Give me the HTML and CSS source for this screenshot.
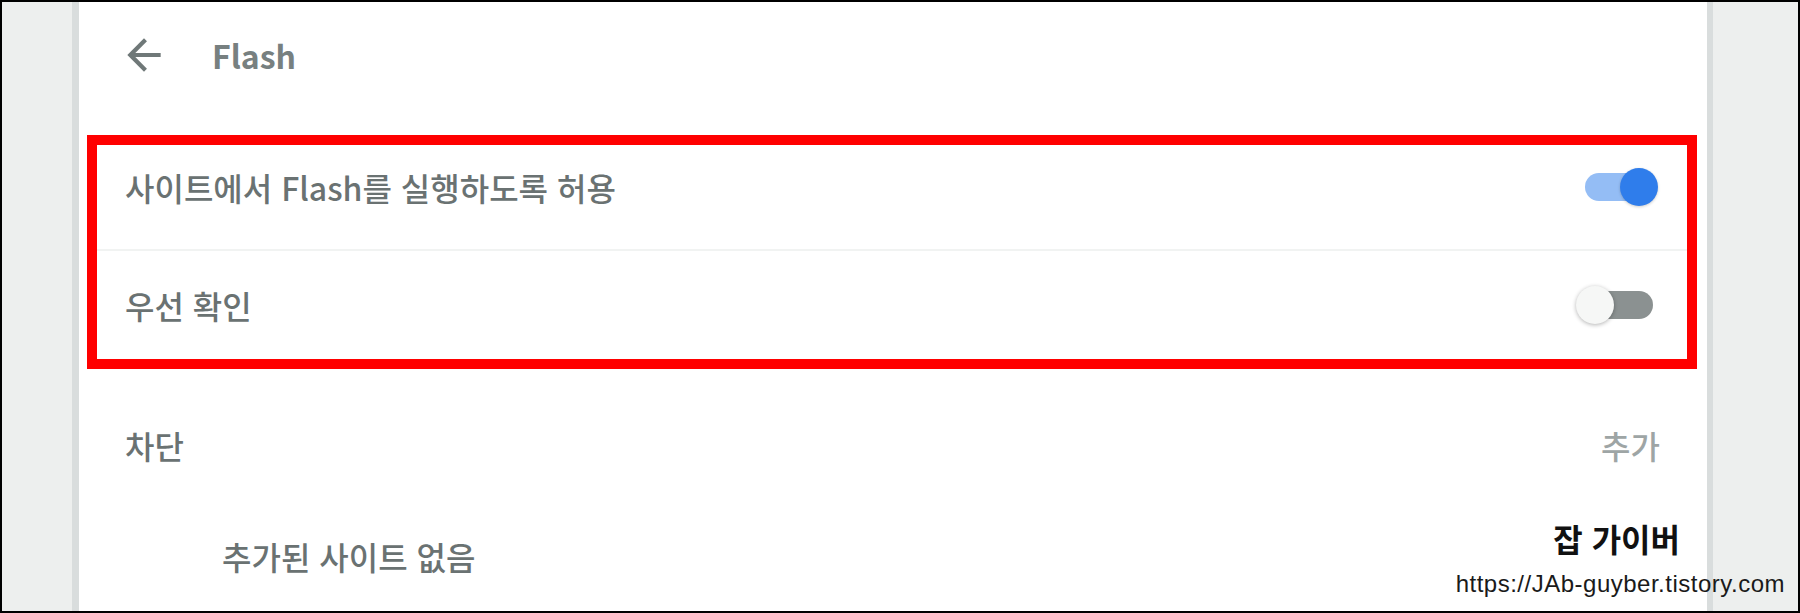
FILE: index.html
```html
<!DOCTYPE html>
<html lang="ko">
<head>
    <meta charset="UTF-8">
    <meta name="viewport" content="width=device-width, initial-scale=1.0">
    <title>Flash 설정</title>
    <link rel="stylesheet" href="styles.css">
</head>
<body>
    <div class="frame">
        <div class="card">
            <div class="header">
                <svg class="back" viewBox="0 0 24 24" width="50" height="50">
                    <path d="M20 11H7.83l5.59-5.59L12 4l-8 8 8 8 1.41-1.41L7.83 13H20v-2z" fill="#6f7878"/>
                </svg>
                <h2>Flash</h2>
            </div>

            <div class="highlight">
                <div class="row first">
                    <span class="label">사이트에서 Flash를 실행하도록 허용</span>
                    <div class="toggle on"><div class="track"></div><div class="knob"></div></div>
                </div>
                <div class="row second">
                    <span class="label">우선 확인</span>
                    <div class="toggle"><div class="track"></div><div class="knob"></div></div>
                </div>
            </div>

            <div class="section">
                <span class="label">차단</span>
                <span class="add">추가</span>
            </div>
            <div class="empty">
                <span class="label">추가된 사이트 없음</span>
            </div>
        </div>

        <div class="watermark">
            <div class="name">잡 가이버</div>
            <div class="url">https://JAb-guyber.tistory.com</div>
        </div>
    </div>
</body>
</html>
```

FILE: styles.css
```css
body {
    margin: 0;
    font-family: "Noto Sans CJK KR", "Noto Sans", sans-serif;
}
.frame {
    width: 1800px;
    height: 613px;
    box-sizing: border-box;
    border: 2px solid #000;
    background: #edefee;
    display: flex;
    position: relative;
    overflow: hidden;
}
.card {
    margin-left: 70px;
    width: 1628px;
    background: #fff;
    border-left: 7px solid #d9dddd;
    border-right: 6px solid #d9dddd;
}
.header {
    height: 106px;
    display: flex;
    align-items: center;
    padding-left: 40px;
}
.header h2 {
    margin: 0 0 0 43px;
    font-size: 32px;
    font-weight: bold;
    color: #778080;
}
.label {
    font-size: 32px;
    font-weight: 500;
    color: #6a7272;
}
.highlight {
    margin: 27px 10px 0 8px;
    border: 10px solid #ff0000;
}
.row {
    display: flex;
    justify-content: space-between;
    align-items: center;
    padding: 0 29px 0 28px;
}
.row.first {
    height: 84px;
    padding-bottom: 20px;
    border-bottom: 2px solid #f1f3f2;
}
.row.second {
    height: 108px;
}
.toggle {
    position: relative;
    width: 82px;
    height: 38px;
}
.track {
    position: absolute;
    left: 9px;
    top: 5px;
    width: 68px;
    height: 28px;
    border-radius: 14px;
    background: #8b9191;
}
.knob {
    position: absolute;
    left: 0;
    top: 0;
    width: 38px;
    height: 38px;
    border-radius: 50%;
    background: #f6f7f6;
    box-shadow: 0 1px 4px rgba(0, 0, 0, 0.3);
}
.toggle.on .track {
    background: #94bdf5;
}
.toggle.on .knob {
    left: 44px;
    background: #2f7deb;
    box-shadow: 0 1px 3px rgba(0, 0, 0, 0.2);
}
.section {
    margin-top: 46px;
    height: 60px;
    display: flex;
    justify-content: space-between;
    align-items: center;
    padding: 0 47px 0 46px;
}
.add {
    font-size: 32px;
    font-weight: 500;
    color: #9ea5a5;
}
.empty {
    margin-top: 51px;
    height: 60px;
    display: flex;
    align-items: center;
    padding-left: 143px;
}
.watermark {
    position: absolute;
    right: 13px;
    bottom: 12px;
    text-align: right;
}
.watermark .name {
    font-size: 32px;
    font-weight: bold;
    color: #111;
    padding-right: 105px;
    line-height: 40px;
    margin-bottom: 11px;
}
.watermark .url {
    font-family: "Liberation Sans", sans-serif;
    font-size: 24px;
    letter-spacing: 0.5px;
    color: #1a1a1a;
    line-height: 30px;
}
```
